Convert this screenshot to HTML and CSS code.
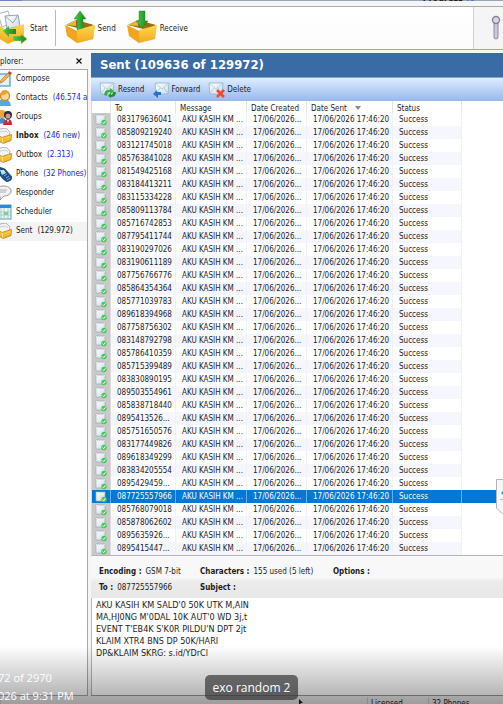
FILE: index.html
```html
<!DOCTYPE html>
<html lang="en">
<head>
<meta charset="utf-8">
<title>Sent messages</title>
<link rel="stylesheet" href="styles.css">
</head>
<body>
<svg class="defs" aria-hidden="true">
  <defs>
    <linearGradient id="gold" x1="0" y1="0" x2="0" y2="1"><stop offset="0" stop-color="#ffd84e"/><stop offset="1" stop-color="#f5a81c"/></linearGradient>
    <linearGradient id="green" x1="0" y1="0" x2="1" y2="0"><stop offset="0" stop-color="#52c84e"/><stop offset="1" stop-color="#138a1b"/></linearGradient>
    <linearGradient id="paper" x1="0" y1="0" x2="1" y2="1"><stop offset="0" stop-color="#fff"/><stop offset="1" stop-color="#c9dcea"/></linearGradient>
    <symbol id="box" viewBox="0 0 32 36">
      <path d="M2 15 12 10 30 15 21 20Z" fill="#9c6a14"/>
      <path d="M2 15 12 10 12 16Z" fill="#e9b43a"/>
      <path d="M1 15 13 21 13 33 3 26Z" fill="#f0a51d"/>
      <path d="M13 20 31 15 29 29 13 33Z" fill="url(#gold)"/>
    </symbol>
    <symbol id="tray" viewBox="0 0 16 16">
      <path d="M1 6 4 1 10 0 14 4 13 9 6 11Z" fill="#f1f3f6" stroke="#a2a2a2" stroke-width=".8"/>
      <path d="M4 4 10 3 12 5" fill="none" stroke="#c0c4c8" stroke-width=".8"/>
      <path d="M0 6 6 9.500 15.500 6.500 15 12.500 7 15.500 0 11Z" fill="url(#gold)" stroke="#a8821e" stroke-width=".8"/>
      <path d="M6 9.500 7 15.500" stroke="#fff0a8" stroke-width=".8"/>
    </symbol>
    <symbol id="mail" viewBox="0 0 16 14">
      <path d="M1 1 15 1 14 12 2 12Z" fill="url(#paper)" stroke="#8eb4c8" stroke-width=".8"/>
      <path d="M1 1 8 7 15 1M2 12 6 6M14 12 10 6" fill="none" stroke="#a9c6d4" stroke-width=".8"/>
    </symbol>
    <symbol id="sentmail" viewBox="0 0 12 12">
      <path d="M1 1H10V10H1Z" fill="url(#paper)" stroke="#a2aaae" stroke-width=".7"/>
      <path d="M1 1 5 5 10 1" fill="none" stroke="#e8eef2" stroke-width=".8"/>
      <circle cx="9" cy="8.500" r="2.700" fill="#46c956"/>
      <path d="M7.500 8.500 8.700 9.700 10.500 7.300" fill="none" stroke="#fff" stroke-width="1"/>
    </symbol>
  </defs>
</svg>

<div class="titlebar"><span class="titlebar-accent"></span><span class="titlebar-text">Progress <i>fo</i></span></div>

<header class="toolbar">
  <button class="tool" type="button">
    <svg class="start-icon" viewBox="0 0 32 36">
      <path d="M3 4 13 1 17 13 7 17Z" fill="#fff" stroke="#a8b4bc"/>
      <path d="M10 6 23 5 25 16 12 19Z" fill="url(#paper)" stroke="#98a4ae"/>
      <path d="M10 6 18 13 23 5" fill="none" stroke="#98a4ae"/>
      <path d="M1 13 11 20 29 14 29 27 13 34 3 28Z" fill="url(#gold)"/>
      <path d="M8 21 14 16 14 19 21 19 21 24 14 24 14 27Z" fill="url(#green)"/>
      <path d="M32 29 26 24 26 26 18 26 18 31 26 31 26 34Z" fill="url(#green)" stroke="#e8bd40" stroke-width=".5"/>
    </svg>Start</button>
  <span class="divider"></span>
  <button class="tool send" type="button">
    <svg class="box-icon" viewBox="0 0 32 36">
      <use href="#box"/><path d="M16 1 22 9 19 9 19 22 13 20 13 9 10 9Z" fill="url(#green)" stroke="#117c1a" stroke-width=".4"/>
      <path d="M13 20 31 15 29 29 13 33Z" fill="url(#gold)"/>
    </svg>Send</button>
  <button class="tool" type="button">
    <svg class="box-icon" viewBox="0 0 32 36">
      <use href="#box"/><path d="M16 18 22 11 19 11 19 1 13 1 13 11 10 11Z" fill="url(#green)" stroke="#117c1a" stroke-width=".4"/>
    </svg>Receive</button>
  <button class="tool-end" type="button" aria-label="Options">
    <svg class="pin-icon" viewBox="0 0 10 26"><rect x="3" y="6" width="4" height="18" rx="2" fill="#c9c9df" stroke="#8c8c98"/><circle cx="5" cy="5" r="3.500" fill="#d6d6ec" stroke="#858591" stroke-width="1.400"/></svg>
  </button>
</header>

<div class="workspace">
  <aside class="explorer">
    <div class="explorer-head"><span>plorer:</span><button class="close" type="button" aria-label="Close"><svg viewBox="0 0 6 6"><path d="M.5 .5 5.500 5.500M5.500 .5 .5 5.500" stroke="#111" stroke-width="1.200"/></svg></button></div>
    <nav class="folders">
      <a href="#compose"><svg viewBox="0 0 16 16"><rect x="1" y="3" width="13" height="12" fill="#e3f1fd" stroke="#4a94d8" stroke-width="1.200"/><path d="M4 12 5 9 12 2 14 4 7 11Z" fill="#f4b73f" stroke="#b5651d" stroke-width=".6"/><path d="M12 2 13 0 16 2 14 4Z" fill="#d33a3a"/></svg>Compose</a>
      <a href="#contacts"><svg viewBox="0 0 16 16"><path d="M1 16Q2 9 8 9T15 16Z" fill="#58a6e4"/><circle cx="9" cy="6" r="4.500" fill="#fbd9a6" stroke="#d98e1c" stroke-width="1.400"/><path d="M4 5Q9 6 11 3L14 5Q13 0 9 0T4 5Z" fill="#e9a12b"/></svg>Contacts <em>(46.574 a</em></a>
      <a href="#groups"><svg viewBox="0 0 16 16"><circle cx="6" cy="5" r="4" fill="#e8a440"/><path d="M1 15Q2 9 6 9T10 14Z" fill="#3e8ad0"/><circle cx="12" cy="6" r="4" fill="#262b4c"/><circle cx="12" cy="7" r="2.500" fill="#d59a76"/><path d="M7 16Q8 10 12 10T16 16Z" fill="#d4252c"/><path d="M11 11 12 14 13 11Z" fill="#fff"/></svg>Groups</a>
      <a href="#inbox"><svg viewBox="0 0 16 16"><use href="#tray"/></svg><b>Inbox</b> <em>(246 new)</em></a>
      <a href="#outbox"><svg viewBox="0 0 16 16"><use href="#tray"/></svg>Outbox <em>(2.313)</em></a>
      <a href="#phone"><svg viewBox="0 0 16 16"><path d="M3 1 9 3 16 11 15 14 11 16 7 13 2 7Z" fill="#1d5089" stroke="#112e50" stroke-width=".6"/><path d="M4 4 8 4 10 7 6 9Z" fill="#b9e4fa"/><path d="M8 10 11 8M10 12 13 10M11 14 14 12" stroke="#7fb4e0"/></svg>Phone <em>(32 Phones)</em></a>
      <a href="#responder"><svg viewBox="0 0 16 16"><path d="M7 1C12 1 15 3 15 6S12 11 8 11L4 15 4 11C1 10 0 8 0 6S3 1 7 1Z" fill="#f2f2f2" stroke="#999"/><path d="M3 5H11M3 7H10" stroke="#b0b0b0"/></svg>Responder</a>
      <a href="#scheduler"><svg viewBox="0 0 16 16"><rect x="1" y="1" width="14" height="14" fill="#eaf6fb" stroke="#549dcd"/><rect x="1" y="1" width="14" height="3" fill="#2c8ad6"/><path d="M1 8H15M1 11H15M5 4V15M8 4V15M12 4V15" stroke="#94c8b8" stroke-width=".8"/><rect x="8" y="8" width="4" height="3" fill="#87cf7a"/></svg>Scheduler</a>
      <a class="current" href="#sent"><svg viewBox="0 0 16 16"><use href="#tray"/></svg>Sent <span class="count">(129.972)</span></a>
    </nav>
  </aside>

  <main class="content">
    <h1>Sent (109636 of 129972)</h1>
    <div class="actions">
      <button type="button"><svg viewBox="0 0 18 16"><use href="#mail" width="16" height="14"/><path d="M5 13Q6 7 11 8L11 6 15 9 11 12 11 10Q8 10 8 14Z" fill="#35b23c"/><path d="M17 10Q17 15 12 15L12 16 9 14 12 11 12 13Q14 13 14 10Z" fill="#218f2b"/></svg>Resend</button>
      <button type="button"><svg viewBox="0 0 18 16"><use href="#mail" x="2" width="16" height="14"/><path d="M6 16 1 12 5 8 5 10 9 10 9 13 6 13Z" fill="#2773c4"/></svg>Forward</button>
      <button type="button"><svg viewBox="0 0 18 16"><use href="#mail" width="16" height="14"/><path d="M9 8 16 15M16 8 9 15" stroke="#ee492d" stroke-width="2.600"/></svg>Delete</button>
    </div>
    <div class="list">
      <table>
        <colgroup><col class="c-icon"><col class="c-to"><col class="c-msg"><col class="c-created"><col class="c-sent"><col class="c-status"><col></colgroup>
        <thead><tr><th></th><th>To</th><th>Message</th><th>Date Created</th><th>Date Sent<span class="sort"></span></th><th>Status</th><th></th></tr></thead>
        <tbody id="rows"></tbody>
      </table>
    </div>
    <dl class="details">
      <div><dt>Encoding :</dt><dd>GSM 7-bit</dd></div>
      <div><dt>Characters :</dt><dd>155 used (5 left)</dd></div>
      <div><dt>Options :</dt><dd></dd></div>
      <div><dt>To :</dt><dd>087725557966</dd></div>
      <div><dt>Subject :</dt><dd></dd></div>
    </dl>
    <p class="message">AKU KASIH KM SALD'0 50K UTK M,AIN<br>MA,HJ0NG M'0DAL 10K AUT'0 WD 3j,t<br>EVENT T'EB4K S'K0R PILDU'N DPT 2jt<br>KLAIM XTR4 BNS DP 50K/HARI<br>DP&amp;KLAIM SKRG: s.id/YDrCl</p>
  </main>
</div>

<footer class="status"><span></span><span>Licensed</span><span>32 Phones</span></footer>

<svg class="side-tab" viewBox="0 0 7 36"><path d="M8 .5H.5V29L7 35.500H8Z" fill="#f6f6f6" stroke="#b5b5b5"/><path d="M5 14 7 12V16Z" fill="#3aa0d0"/><path d="M4 20.500H7" stroke="#bbb"/></svg>
<div class="viewer">
  <div class="viewer-meta">72 of 2970<br>026 at 9:31 PM</div>
  <div class="viewer-caption">exo random 2</div>
</div>
<svg class="pointer" viewBox="0 0 4 5"><path d="M0 0 4 4 2 4 1 5 0 5Z" fill="#111"/></svg>
<script src="rows.js"></script>
</body>
</html>
```

FILE: styles.css
```css
* { box-sizing: border-box; }

body {
  margin: 0;
  height: 100vh;
  display: flex;
  flex-direction: column;
  overflow: hidden;
  background: #f5f5f6;
  color: #1c1c1c;
  font: 8px/13px "DejaVu Sans Condensed", "DejaVu Sans", sans-serif;
}

button {
  margin: 0;
  padding: 0;
  border: 0;
  background: none;
  color: inherit;
  font: inherit;
  display: flex;
  align-items: center;
}

.defs { position: absolute; width: 0; height: 0; }

/* Window top edge */
.titlebar {
  flex: none;
  display: flex;
  align-items: flex-end;
  justify-content: space-between;
  height: 1px;
  margin-bottom: 5px;
  overflow: hidden;
  background: #9aa4b4;
}
.titlebar-accent { width: 22px; height: 1px; background: #6f83ba; }
.titlebar-text { margin-right: 28px; font-size: 9px; font-weight: bold; line-height: 5px; }
.titlebar-text i { color: #4a78c0; font-style: normal; }

/* Main toolbar */
.toolbar {
  flex: none;
  display: flex;
  align-items: center;
  height: 44px;
  border-top: 1px solid #aaa;
  border-bottom: 1px solid #a4a4a4;
  background: linear-gradient(#fff, #fcfcfc);
}
.tool { gap: 3px; }
.start-icon, .box-icon { width: 32px; height: 36px; }
.start-icon { margin-left: -5px; }
.box-icon { margin-right: -1px; }
.divider { width: 1px; height: 36px; margin: 0 8px 0 7px; background: #bbb; }
.send { margin-right: 10px; }
.tool-end {
  align-self: stretch;
  justify-content: center;
  width: 30px;
  margin-left: auto;
  padding-left: 14px;
  border-left: 1px solid #d0d0d0;
  background: #f5f5f5;
}
.pin-icon { width: 10px; height: 26px; }

.workspace { flex: 1; min-height: 0; display: flex; gap: 3px; padding-top: 3px; }

/* Folder explorer */
.explorer { flex: none; width: 88px; display: flex; flex-direction: column; }
.explorer-head { display: flex; align-items: center; justify-content: space-between; height: 16px; padding: 0 6px 0 0; }
.close svg { width: 6px; height: 6px; }
.folders {
  flex: 1;
  display: grid;
  grid-template-rows: repeat(9, 19px);
  align-content: start;
  border: solid #a8a8a8;
  border-width: 1px 1px 1px 0;
  background: #fff;
}
.folders a {
  display: flex;
  align-items: center;
  padding-bottom: 2px;
  color: inherit;
  text-decoration: none;
  white-space: nowrap;
  overflow: hidden;
}
.folders svg { flex: none; width: 16px; height: 16px; margin: 0 4px 0 -4px; }
.folders em { margin-left: 5px; color: #2222f0; font-style: normal; }
.count { margin-left: 5px; }
.folders .current { background: #f3f3f3; }

/* Message pane */
.content { flex: 1; min-width: 0; display: flex; flex-direction: column; border-bottom: 1px solid #999; }
h1 {
  flex: none;
  margin: 0;
  padding-left: 9px;
  background: #396ba5;
  color: #fff;
  font-size: 13px;
  line-height: 24px;
}
.actions {
  flex: none;
  display: flex;
  gap: 8px;
  height: 24px;
  padding-left: 8px;
  border-top: 1px solid #7ba4d8;
  background: linear-gradient(#deeeff, #bad2f7 50%, #97b9ec);
}
.actions button { gap: 1px; }
.actions svg { width: 18px; height: 16px; }

.list { flex: none; border-left: 1px solid #d8d8d8; border-bottom: 1px solid #b5b5b5; background: #fff; }
table { width: 100%; table-layout: fixed; border-collapse: separate; border-spacing: 0; }
.c-icon { width: 19px; }
.c-to { width: 65px; }
.c-msg { width: 71px; }
.c-created { width: 60px; }
.c-sent { width: 86px; }
.c-status { width: 69px; }
th, td {
  height: 13px;
  padding: 0 0 0 6px;
  border-right: 1px solid #f1f1f6;
  font-weight: normal;
  text-align: left;
  white-space: nowrap;
  overflow: hidden;
}
th { height: 12px; padding: 3px 0 0 4px; line-height: 9px; border-color: #e4e4e4; }
th:last-child, td:last-child { border-right: 0; }
.sort {
  display: inline-block;
  margin: 0 0 1px 8px;
  border: solid transparent;
  border-width: 4px 3px 0;
  border-top-color: #8a8a8a;
}
td:first-child { padding: 0 0 0 3px; background: #c9c9c9; border-color: #dcdcdc; }
td svg { display: block; width: 12px; height: 12px; }
tbody tr:nth-child(even) td:not(:first-child, :last-child) { background: #f6f6fe; }
tbody tr.selected:nth-child(n) td:nth-child(n):not(.none, #none) {
  border-color: #69b1ea;
  background: #0078d7;
  color: #fff;
}

.details {
  flex: none;
  display: grid;
  grid-template-columns: 101px 133px 1fr;
  grid-auto-rows: 16px;
  margin: 0;
  padding: 7px 0 3px 8px;
  background: linear-gradient(#f8f8f8 50%, #ebebeb 62%, #e8e8e8);
}
.details div { display: flex; align-items: center; gap: 4px; white-space: nowrap; }
.details dt { font-weight: bold; }
.details dd { margin: 0; }

.message {
  flex: 1;
  margin: 0;
  padding: 1px 4px;
  border-left: 1px solid #b5b5b5;
  background: #fff;
  font-size: 9px;
  line-height: 12px;
}

/* Status bar */
.status {
  flex: none;
  display: grid;
  grid-template-columns: 1fr 61px 75px;
  height: 8px;
  padding-top: 1px;
  background: #eee;
  overflow: hidden;
}
.status span { padding-left: 3px; border-left: 1px solid #d0d0d0; }

/* Overlays */
.side-tab { position: absolute; top: 479px; right: 0; width: 7px; height: 36px; }
.viewer {
  position: absolute;
  inset: auto 0 0;
  height: 58px;
  background: linear-gradient(rgba(0, 0, 0, 0), rgba(0, 0, 0, .34));
  color: #fff;
  font-family: "Open Sans", "Noto Sans", sans-serif;
}
.viewer-meta { position: absolute; left: -2px; bottom: -1px; font-size: 11px; line-height: 18px; }
.viewer-caption {
  position: absolute;
  left: 50%;
  bottom: 4px;
  translate: -50%;
  padding: 0 8px;
  border-radius: 5px;
  background: rgba(50, 50, 50, .68);
  font-size: 12px;
  line-height: 25px;
  white-space: nowrap;
}
.pointer { position: absolute; bottom: 0; left: 299px; width: 4px; height: 5px; }
```

FILE: rows.js
```js
const numbers = [
  "083179636041", "085809219240", "083121745018", "085763841028", "081549425168",
  "083184413211", "083115334228", "085809113784", "085716742853", "087795411744",
  "083190297026", "083190611189", "087756766776", "085864354364", "085771039783",
  "089618394968", "087758756302", "083148792798", "085786410359", "085715399489",
  "083830890195", "089503554961", "085838718440", "0895413526...", "085751650576",
  "083177449826", "089618349299", "083834205554", "0895429459...", "087725557966",
  "085768079018", "085878062602", "0895635926...", "0895415447..."
];
const selected = "087725557966";

document.getElementById("rows").innerHTML = numbers.map(n => `
  <tr${n === selected ? ' class="selected"' : ""}>
    <td><svg viewBox="0 0 12 12"><use href="#sentmail"/></svg></td>
    <td>${n}</td><td>AKU KASIH KM ...</td><td>17/06/2026...</td>
    <td>17/06/2026 17:46:20</td><td>Success</td><td></td>
  </tr>`).join("");
```
